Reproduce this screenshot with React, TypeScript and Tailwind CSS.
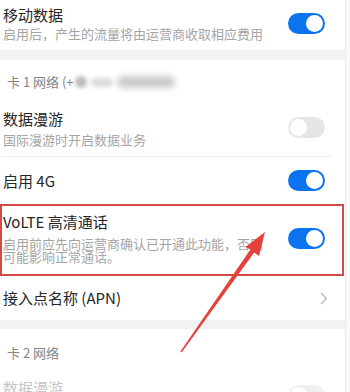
import React from 'react'

function Toggle({ on, faded }: { on: boolean; faded?: boolean }) {
  const track = on ? 'bg-[#0c73ef]' : faded ? 'bg-[#f1f1f1]' : 'bg-[#e6e6e6]'
  return (
    <div className={`relative h-[21px] w-[37px] shrink-0 rounded-full ${track}`}>
      <div
        className={`absolute top-[2px] h-[17px] w-[17px] rounded-full bg-white ${on ? 'right-[2px]' : 'left-[2px]'}`}
      />
    </div>
  )
}

function Chevron() {
  return (
    <svg width="8" height="13" viewBox="0 0 8 13" fill="none">
      <path d="M1.5 1.5 L6.5 6.5 L1.5 11.5" stroke="#b8b8b8" strokeWidth="1.4" strokeLinecap="round" strokeLinejoin="round" />
    </svg>
  )
}

export default function App() {
  return (
    <div
      className="flex h-[392px] w-[350px] overflow-hidden bg-white"
      style={{ fontFamily: '"Noto Sans CJK SC", "Noto Sans", sans-serif' }}
    >
      <div className="relative w-[345px] shrink-0">
        {/* 移动数据 */}
        <div className="flex h-[50px] items-start pl-[3px] pr-[20px]">
          <div className="pt-[5px]">
            <div className="text-[15px] leading-[20px] text-[#262626]">移动数据</div>
            <div className="mt-[1px] text-[13px] leading-[16px] text-[#a5a5a5]">
              启用后，产生的流量将由运营商收取相应费用
            </div>
          </div>
          <div className="ml-auto mt-[13px]">
            <Toggle on />
          </div>
        </div>

        <div className="h-[10px] bg-[#f2f2f2]" />

        {/* 卡 1 网络 */}
        <div className="flex h-[44px] items-center pl-[7px] text-[13px] text-[#858585]">
          <span>卡 1 网络 (+</span>
          <span className="ml-[1px] flex items-center gap-[4px]">
            <span className="h-[12px] w-[12px] rounded-full bg-[#b9b9b9] blur-[2px]" />
            <span className="h-[9px] w-[22px] rounded-full bg-[#dcdcdc] blur-[2px]" />
            <span className="h-[12px] w-[58px] rounded-full bg-[#cacaca] blur-[3px]" />
          </span>
        </div>

        {/* 数据漫游 */}
        <div className="flex h-[52px] items-start pl-[3px] pr-[20px]">
          <div className="pt-[5px]">
            <div className="text-[15px] leading-[20px] text-[#262626]">数据漫游</div>
            <div className="mt-[3px] text-[13px] leading-[16px] text-[#a5a5a5]">国际漫游时开启数据业务</div>
          </div>
          <div className="ml-auto mt-[13px]">
            <Toggle on={false} />
          </div>
        </div>
        <div className="ml-[3px] h-px w-[329px] bg-[#eeeeee]" />

        {/* 启用 4G */}
        <div className="flex h-[47px] items-center pl-[3px] pr-[20px]">
          <div className="text-[15px] leading-[20px] text-[#262626]">启用 4G</div>
          <div className="ml-auto">
            <Toggle on />
          </div>
        </div>

        {/* VoLTE */}
        <div className="flex h-[72px] w-[344px] items-start border-2 border-[#d44848] pl-[1px] pr-[17px]">
          <div className="pt-[6px]">
            <div className="text-[15px] leading-[20px] text-[#262626]">VoLTE 高清通话</div>
            <div className="mt-[5px] w-[262px] text-[13px] leading-[13px] text-[#a5a5a5]">
              启用前应先向运营商确认已开通此功能，否则可能影响正常通话。
            </div>
          </div>
          <div className="ml-auto mt-[22px]">
            <Toggle on />
          </div>
        </div>

        {/* APN */}
        <div className="flex h-[44px] items-center pl-[3px] pr-[17px]">
          <div className="text-[15px] leading-[20px] text-[#262626]">接入点名称 (APN)</div>
          <div className="ml-auto flex items-center">
            <Chevron />
          </div>
        </div>

        <div className="h-[9px] bg-[#f2f2f2]" />

        {/* 卡 2 网络 */}
        <div className="flex h-[48px] items-center pl-[7px] text-[13px] text-[#858585]">卡 2 网络</div>

        <div className="flex items-start pl-[3px] pr-[20px] pt-[1px]">
          <div className="text-[15px] leading-[20px] text-[#c6c6c6]">数据漫游</div>
          <div className="ml-auto mt-[7px]">
            <Toggle on={false} faded />
          </div>
        </div>

        {/* annotation arrow */}
        <svg className="pointer-events-none absolute left-0 top-0" width="345" height="392" viewBox="0 0 345 392">
          <polygon
            points="265,232 259,256 254.2,252.4 181.6,352.4 180.4,351.6 250.4,249.6 245.4,247"
            fill="#e6413a"
          />
        </svg>
      </div>
      <div className="w-px bg-[#ebebeb]" />
      <div className="flex-1 bg-[#fafafa]" />
    </div>
  )
}
